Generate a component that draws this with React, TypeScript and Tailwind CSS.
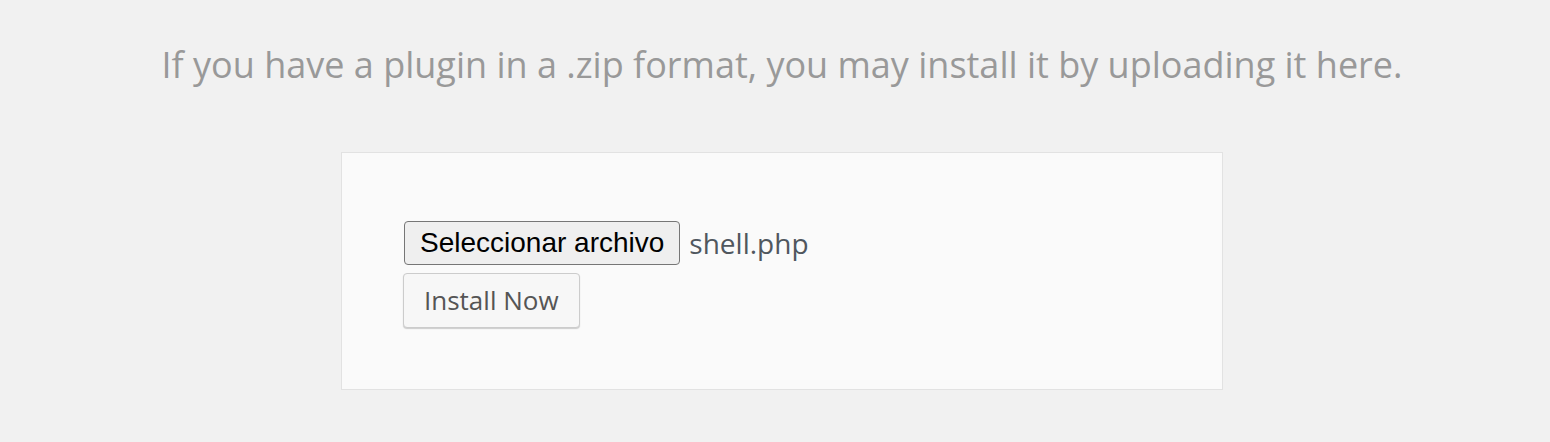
import React from 'react';

const App: React.FC = () => {
  return (
    <div className="min-h-[442px] w-full bg-[#f1f1f1] pl-[14px] font-['Open_Sans',sans-serif]">
      <div className="flex flex-col items-center">
        <p className="pt-[40px] text-[36px] leading-[50px] text-[#999999]">
          If you have a plugin in a .zip format, you may install it by uploading it here.
        </p>

        <form className="mt-[62px] h-[238px] w-[882px] border border-[#e2e2e2] bg-[#fafafa] pl-[62px] pt-[68px]">
          <div className="flex items-center">
            <button
              type="button"
              className="h-[44px] rounded-[4px] border border-[#767676] bg-[#efefef] px-[15px] font-['Liberation_Sans',Arial,sans-serif] text-[28px] leading-none text-black"
            >
              Seleccionar archivo
            </button>
            <span className="ml-[9px] text-[28px] text-[#50575e]">shell.php</span>
          </div>
          <button
            type="button"
            className="ml-[-1px] mt-[8px] h-[55px] rounded-[4px] border border-[#cccccc] bg-[#f7f7f7] px-[20px] text-[26px] text-[#555555] shadow-[0_1px_1px_#cccccc]"
          >
            Install Now
          </button>
        </form>
      </div>
    </div>
  );
};

export default App;
